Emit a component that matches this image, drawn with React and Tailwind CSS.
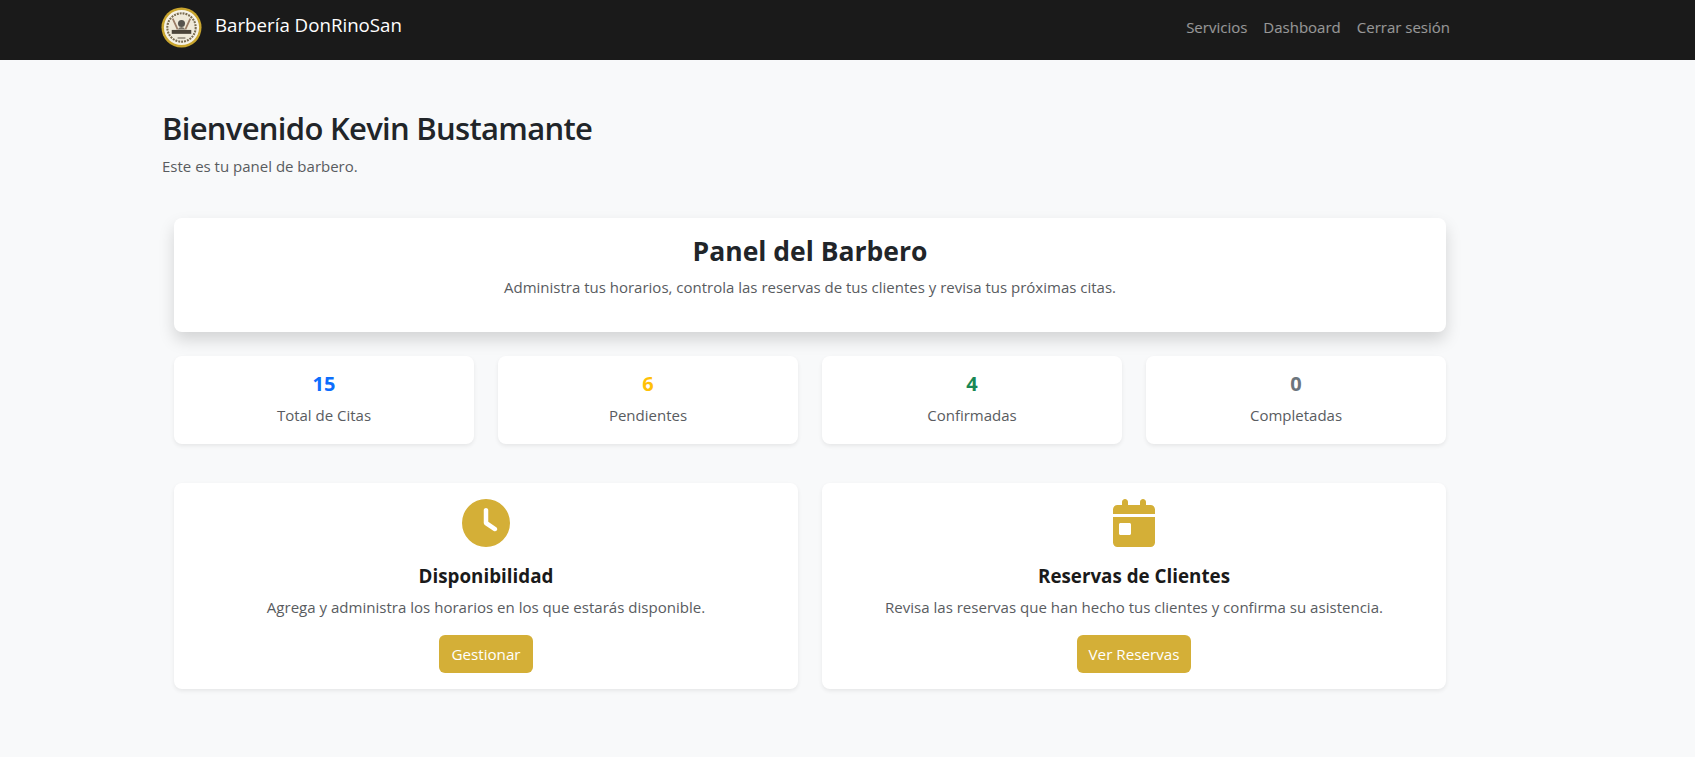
import React from 'react';
import { FaClock, FaCalendarDay } from 'react-icons/fa6';

const stats = [
  { value: '15', label: 'Total de Citas', color: 'text-[#0d6efd]' },
  { value: '6', label: 'Pendientes', color: 'text-[#ffc107]' },
  { value: '4', label: 'Confirmadas', color: 'text-[#198754]' },
  { value: '0', label: 'Completadas', color: 'text-[#6c757d]' },
];

function Logo() {
  return (
    <svg width="41" height="41" viewBox="0 0 42 42" className="-ml-px shrink-0">
      <circle cx="21" cy="21" r="20.5" fill="#c9a52e" />
      <circle cx="21" cy="21" r="18" fill="#f6f2e6" />
      <circle cx="21" cy="21" r="14.5" fill="none" stroke="#7a6c50" strokeWidth="2.2" strokeDasharray="2 1" />
      <circle cx="21" cy="21" r="13" fill="#efe9d8" />
      <path d="M12 12 L17 23 M30 12 L25 23" stroke="#9a7c66" strokeWidth="1.8" />
      <circle cx="21" cy="17" r="3.6" fill="#55534e" />
      <path d="M17 23 Q21 18 25 23 Z" fill="#77736a" />
      <rect x="11" y="23.5" width="20" height="4" fill="#4a4338" />
      <rect x="17" y="31" width="8" height="1.5" fill="#8b8474" />
    </svg>
  );
}

export default function App() {
  return (
    <div className="min-h-[757px] bg-[#f8f9fa] font-['Open_Sans','Noto_Sans',sans-serif] text-[#212529]">
      <nav className="h-[60px] bg-[#1a1a1a]">
        <div className="ml-[150px] flex h-[56px] w-[1320px] items-center justify-between px-3">
          <div className="-mt-[2px] flex items-center gap-[13px]">
            <Logo />
            <span className="-mt-[4px] text-[18.7px] text-white">Barbería DonRinoSan</span>
          </div>
          <div className="-mt-[2px] flex gap-4 pr-[8px] text-[15px] text-white/55">
            <span>Servicios</span>
            <span>Dashboard</span>
            <span>Cerrar sesión</span>
          </div>
        </div>
      </nav>

      <main className="ml-[150px] w-[1320px] px-3 pt-[49px]">
        <h1 className="text-[31px] leading-[1.25] font-semibold tracking-[-0.7px]">Bienvenido Kevin Bustamante</h1>
        <p className="mt-[6px] text-[15px] leading-6 text-[#595c5f]">Este es tu panel de barbero.</p>

        <div className="mx-3 mt-[40px]">
          <section className="flex h-[114px] flex-col items-center rounded-lg bg-white pt-[18px] shadow-[0_8px_16px_rgba(0,0,0,0.15)]">
            <h2 className="text-[26.5px] leading-[1.2] font-bold">Panel del Barbero</h2>
            <p className="mt-[7px] text-[15px] leading-6 text-[#595c5f]">
              Administra tus horarios, controla las reservas de tus clientes y revisa tus próximas citas.
            </p>
          </section>

          <div className="mt-6 grid grid-cols-4 gap-6">
            {stats.map((s) => (
              <div key={s.label} className="flex h-[88px] flex-col items-center rounded-lg bg-white pt-[16px] shadow-[0_2px_4px_rgba(0,0,0,0.075)]">
                <div className={`text-[20px] leading-[1.2] font-bold ${s.color}`}>{s.value}</div>
                <div className="mt-[7px] text-[15px] leading-6 text-[#595c5f]">{s.label}</div>
              </div>
            ))}
          </div>

          <div className="mt-[39px] grid grid-cols-2 gap-6">
            <ActionCard icon={<FaClock size={48} />} title="Disponibilidad" text="Agrega y administra los horarios en los que estarás disponible." button="Gestionar" />
            <ActionCard icon={<FaCalendarDay size={48} />} title="Reservas de Clientes" text="Revisa las reservas que han hecho tus clientes y confirma su asistencia." button="Ver Reservas" />
          </div>
        </div>
      </main>
    </div>
  );
}

function ActionCard({ icon, title, text, button }) {
  return (
    <div className="flex h-[206px] flex-col items-center rounded-lg bg-white pt-4 shadow-[0_2px_4px_rgba(0,0,0,0.075)]">
      <div className="text-[#d4af37]">{icon}</div>
      <h5 className="mt-[18px] text-[18.8px] leading-[1.2] font-bold text-[#1a1a1a]">{title}</h5>
      <p className="mt-[8px] text-[15.05px] leading-6 text-[#595c5f]">{text}</p>
      <button className="mt-[16px] h-[38px] rounded-md bg-[#d4af37] px-3 text-[15.2px] text-white">{button}</button>
    </div>
  );
}
